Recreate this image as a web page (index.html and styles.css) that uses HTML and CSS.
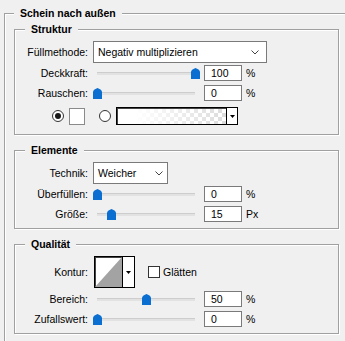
FILE: index.html
```html
<!DOCTYPE html>
<html lang="de">
<head>
    <meta charset="UTF-8">
    <meta name="viewport" content="width=device-width, initial-scale=1.0">
    <title>Schein nach außen</title>
    <link rel="stylesheet" href="styles.css">
</head>
<body>
    <fieldset class="group outer">
        <legend>Schein nach außen</legend>

        <fieldset class="group sub">
            <legend>Struktur</legend>
            <div class="row row-select">
                <span class="lbl">Füllmethode:</span>
                <div class="select select-wide">
                    <span>Negativ multiplizieren</span>
                    <svg class="chev" width="8" height="5" viewBox="0 0 8 5"><polyline points="0.5,0.5 4,4 7.5,0.5" fill="none" stroke="#444" stroke-width="1"/></svg>
                </div>
            </div>
            <div class="row">
                <span class="lbl">Deckkraft:</span>
                <div class="slider"><div class="track"></div><svg class="thumb" style="--v:100" width="9" height="11" viewBox="0 0 9 11"><path d="M0 4 Q0 2.5 1.5 1.5 L4.5 0 L7.5 1.5 Q9 2.5 9 4 V11 H0 Z" fill="#0a6fd1"/></svg></div>
                <div class="num">100</div><span class="unit">%</span>
            </div>
            <div class="row">
                <span class="lbl">Rauschen:</span>
                <div class="slider"><div class="track"></div><svg class="thumb" style="--v:0" width="9" height="11" viewBox="0 0 9 11"><path d="M0 4 Q0 2.5 1.5 1.5 L4.5 0 L7.5 1.5 Q9 2.5 9 4 V11 H0 Z" fill="#0a6fd1"/></svg></div>
                <div class="num">0</div><span class="unit">%</span>
            </div>
            <div class="row colors">
                <span class="radio on"></span>
                <span class="swatch"></span>
                <span class="radio radio-gap"></span>
                <div class="gradient">
                    <span class="fill"></span>
                    <span class="drop"><svg width="5" height="3" viewBox="0 0 5 3"><path d="M0 0 H5 L2.5 3 Z" fill="#000"/></svg></span>
                </div>
            </div>
        </fieldset>

        <fieldset class="group sub">
            <legend>Elemente</legend>
            <div class="row row-select">
                <span class="lbl">Technik:</span>
                <div class="select select-short">
                    <span>Weicher</span>
                    <svg class="chev" width="8" height="5" viewBox="0 0 8 5"><polyline points="0.5,0.5 4,4 7.5,0.5" fill="none" stroke="#444" stroke-width="1"/></svg>
                </div>
            </div>
            <div class="row">
                <span class="lbl">Überfüllen:</span>
                <div class="slider"><div class="track"></div><svg class="thumb" style="--v:0" width="9" height="11" viewBox="0 0 9 11"><path d="M0 4 Q0 2.5 1.5 1.5 L4.5 0 L7.5 1.5 Q9 2.5 9 4 V11 H0 Z" fill="#0a6fd1"/></svg></div>
                <div class="num">0</div><span class="unit">%</span>
            </div>
            <div class="row">
                <span class="lbl">Größe:</span>
                <div class="slider"><div class="track"></div><svg class="thumb" style="--v:14" width="9" height="11" viewBox="0 0 9 11"><path d="M0 4 Q0 2.5 1.5 1.5 L4.5 0 L7.5 1.5 Q9 2.5 9 4 V11 H0 Z" fill="#0a6fd1"/></svg></div>
                <div class="num">15</div><span class="unit">Px</span>
            </div>
        </fieldset>

        <fieldset class="group sub">
            <legend>Qualität</legend>
            <div class="row row-contour">
                <span class="lbl">Kontur:</span>
                <div class="contour">
                    <svg class="curve" width="27" height="30" viewBox="0 0 27 30"><polygon points="0,30 27,0 27,30" fill="#a3a3a3"/></svg>
                    <span class="drop"><svg width="5" height="3" viewBox="0 0 5 3"><path d="M0 0 H5 L2.5 3 Z" fill="#000"/></svg></span>
                </div>
                <span class="check"></span>
                <span class="check-lbl">Glätten</span>
            </div>
            <div class="row">
                <span class="lbl">Bereich:</span>
                <div class="slider"><div class="track"></div><svg class="thumb" style="--v:50" width="9" height="11" viewBox="0 0 9 11"><path d="M0 4 Q0 2.5 1.5 1.5 L4.5 0 L7.5 1.5 Q9 2.5 9 4 V11 H0 Z" fill="#0a6fd1"/></svg></div>
                <div class="num">50</div><span class="unit">%</span>
            </div>
            <div class="row">
                <span class="lbl">Zufallswert:</span>
                <div class="slider"><div class="track"></div><svg class="thumb" style="--v:0" width="9" height="11" viewBox="0 0 9 11"><path d="M0 4 Q0 2.5 1.5 1.5 L4.5 0 L7.5 1.5 Q9 2.5 9 4 V11 H0 Z" fill="#0a6fd1"/></svg></div>
                <div class="num">0</div><span class="unit">%</span>
            </div>
        </fieldset>
    </fieldset>
</body>
</html>
```

FILE: styles.css
```css
body {
    margin: 0;
    background-color: #f0f0f0;
    font-family: "Liberation Sans", Arial, sans-serif;
    font-size: 10.5px;
    color: #000;
    overflow: hidden;
}

.group {
    border: 1px solid #a0a0a0;
    box-shadow: inset 1px 1px 0 #fff, 1px 1px 0 #fff;
    margin: 0;
    min-width: 0;
}

.group > legend {
    font-weight: bold;
    line-height: 13px;
    padding: 0 6px;
    background-color: #f0f0f0;
}

.outer {
    margin: 7px 0 0 4px;
    padding: 3px 0 0 9px;
    border-right: none;
    border-bottom: none;
    box-shadow: inset 1px 1px 0 #fff;
}

.sub {
    box-sizing: border-box;
    width: 325px;
    padding: 5px 0 4px 10px;
    margin-bottom: 9px;
}

.row {
    display: flex;
    align-items: center;
    height: 20px;
}

.row-select {
    height: 22px;
}

.row-contour {
    height: 32px;
    margin-bottom: 1px;
}

.lbl {
    flex-shrink: 0;
    width: 63px;
    margin-right: 5px;
    text-align: right;
    white-space: nowrap;
}

.select {
    box-sizing: border-box;
    display: flex;
    align-items: center;
    justify-content: space-between;
    height: 22px;
    padding: 0 7px 0 4px;
    border: 1px solid #7a7a7a;
    background-color: #fff;
}

.select-wide {
    width: 174px;
}

.select-short {
    width: 75px;
    padding-right: 4px;
}

.slider {
    position: relative;
    align-self: stretch;
    width: 109px;
}

.track {
    box-sizing: border-box;
    width: 98px;
    height: 3px;
    margin: 9px 0 0 4px;
    border-top: 1px solid #cdcdcd;
    background-color: #e2e2e2;
}

.thumb {
    position: absolute;
    top: 5px;
    left: calc(var(--v) * 0.975px);
}

.num {
    box-sizing: border-box;
    width: 38px;
    height: 16px;
    margin-left: 2px;
    padding-left: 6px;
    border: 1px solid #7a7a7a;
    background-color: #fff;
    line-height: 14px;
}

.unit {
    margin-left: 4px;
}

.colors {
    height: 22px;
    margin: 2px 0 3px;
    padding-left: 27px;
}

.radio {
    box-sizing: border-box;
    display: flex;
    align-items: center;
    justify-content: center;
    width: 12px;
    height: 12px;
    border: 1px solid #333;
    border-radius: 50%;
    background-color: #fff;
}

.radio.on::after {
    content: "";
    width: 6px;
    height: 6px;
    border-radius: 50%;
    background-color: #1a1a1a;
}

.radio-gap {
    margin-left: 14px;
}

.swatch {
    box-sizing: border-box;
    width: 16px;
    height: 17px;
    margin-left: 5px;
    border: 1px solid #8a8a8a;
    background-color: #fff;
}

.gradient {
    box-sizing: border-box;
    display: flex;
    width: 122px;
    height: 18px;
    margin-left: 5px;
    border: 1px solid #000;
    box-shadow: inset 1px 1px 0 #444;
}

.gradient .fill {
    flex: 1;
    margin: 1px 0 0 1px;
    background:
        linear-gradient(to right, #fff 15%, rgba(255, 255, 255, 0) 100%),
        conic-gradient(#dcdcdc 25%, #fff 0 50%, #dcdcdc 0 75%, #fff 0) 0 0 / 8px 8px;
}

.drop {
    display: flex;
    align-items: center;
    justify-content: center;
    border-left: 1px solid #000;
    background-color: #fff;
}

.gradient .drop {
    width: 10px;
}

.contour {
    box-sizing: border-box;
    display: flex;
    width: 41px;
    height: 32px;
    margin-left: 1px;
    border: 1px solid #000;
    box-shadow: inset 1px 1px 0 #444;
    background-color: #fff;
}

.contour .curve {
    align-self: flex-end;
}

.contour .drop {
    flex: 1;
}

.check {
    box-sizing: border-box;
    width: 12px;
    height: 12px;
    margin-left: 13px;
    border: 1px solid #333;
    background-color: #fff;
}

.check-lbl {
    margin-left: 3px;
}
```
